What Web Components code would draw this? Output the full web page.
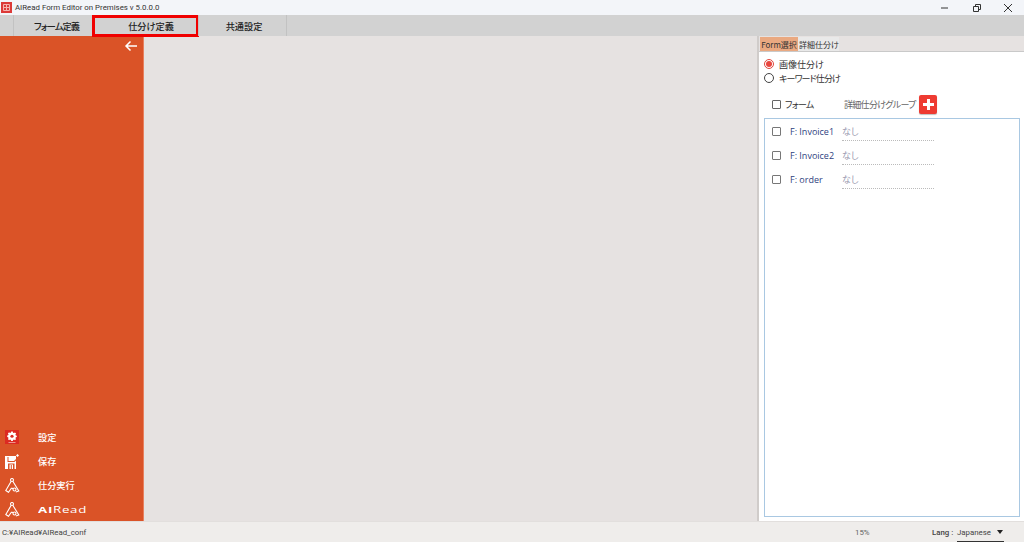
<!DOCTYPE html>
<html lang="ja">
<head>
<meta charset="utf-8">
<title>AIRead Form Editor</title>
<style>
    html, body { margin: 0; height: 100%; }
    body {
        width: 1024px;
        height: 542px;
        overflow: hidden;
        display: flex;
        flex-direction: column;
        font-family: "Noto Sans CJK JP", "Open Sans", sans-serif;
        font-feature-settings: "palt";
        background: #e6e2e1;
    }
    .middle { flex: 1; display: flex; min-height: 0; }
    .canvas { flex: 1; background: #e6e2e1; }
</style>
</head>
<body>
<title-bar title="AIRead Form Editor on Premises v 5.0.0.0"></title-bar>
<tab-bar>
    <top-tab style="width:80px;letter-spacing:-.9px;padding-left:7px">フォーム定義</top-tab>
    <top-tab style="width:107px" active>仕分け定義</top-tab>
    <top-tab style="width:89px;padding-left:3px">共通設定</top-tab>
</tab-bar>
<div class="middle">
    <side-bar>
        <side-item icon="gear">設定</side-item>
        <side-item icon="save">保存</side-item>
        <side-item icon="logo">仕分実行</side-item>
        <side-item icon="logo" brand><b>AI</b>Read</side-item>
    </side-bar>
    <div class="canvas"></div>
    <form-panel>
        <form-row name="F: Invoice1"></form-row>
        <form-row name="F: Invoice2"></form-row>
        <form-row name="F: order"></form-row>
    </form-panel>
</div>
<status-bar path="C:¥AIRead¥AIRead_conf" zoom="15%" lang-name="Japanese"></status-bar>

<script>
const ICONS = {
    gear: `<svg width="14" height="14" viewBox="0 0 14 14">
        <rect width="14" height="14" fill="#dc2a22"/>
        <g transform="translate(1.400 .8) scale(.8)">
            <path fill="#fff" d="M6 1h2l.3 1.400 1.200.5 1.200-.8 1.400 1.400-.8 1.200.5 1.100 1.200.3v1.800l-1.200.3-.5 1.100.8 1.100-1.400 1.300-1.200-.7-1.200.5-.3 1.100H6l-.3-1.100-1.200-.5-1.200.7-1.400-1.300.8-1.100-.5-1.100L1 7.700V5.900l1.200-.3.5-1.100-.8-1.200 1.400-1.400 1.200.8 1.200-.5z"/>
            <circle cx="7" cy="6.800" r="2" fill="#dc2a22"/>
        </g>
        <path d="M3.500 12.500h7" stroke="#f3b0a8" stroke-width=".8"/>
    </svg>`,
    save: `<svg width="15" height="15" viewBox="0 0 15 15">
        <path fill="#fff" d="M0 2h11v3l-2 2H3.500V3H2.500v5h7L11 6.500V15H0z"/>
        <path fill="#da5327" d="M3 9.500h6.500V15H3z"/>
        <path fill="#fff" d="M4.500 10.500h3.500V15H4.500z"/>
        <path fill="#da5327" d="M5.800 11h1V15h-1z"/>
        <path fill="#fff" d="M12.500 0l1.500 1.500-1.500 1.500L11 1.500z"/>
    </svg>`,
    logo: `<svg width="15" height="15" viewBox="0 0 15 15" fill="none" stroke="#fff" stroke-width="1.100">
        <circle cx="7" cy="2" r="1.500"/>
        <circle cx="9.500" cy="11.500" r="1.500"/>
        <path d="M6.200 3.300 .8 12.500l2.700 1.800 3-4.300M7.800 3.300l6 9.700-3 1M6.500 10l1.700.8"/>
    </svg>`
};

class TitleBar extends HTMLElement {
    connectedCallback() {
        this.attachShadow({ mode: 'open' });
        this.shadowRoot.innerHTML = `
            <style>
                :host {
                    display: flex;
                    align-items: center;
                    height: 15px;
                    flex: none;
                    background: #f3f5f9;
                    font: 7.850px Roboto, sans-serif;
                    color: #333;
                }
                .logo { width: 11px; height: 11px; margin: 0 3px 0 1px; display: block; }
                .title { flex: 1; white-space: nowrap; }
                .btns { display: flex; }
                .btn { width: 31.500px; height: 15px; display: flex; align-items: center; justify-content: center; }
            </style>
            <svg class="logo" viewBox="0 0 11 11">
                <rect width="11" height="11" fill="#dc3a38"/>
                <path fill="none" stroke="#f5b5b0" d="M2.500 2.500h6v6h-6zM5.500 2.500v6M2.500 5.500h6"/>
            </svg>
            <span class="title">${this.getAttribute('title')}</span>
            <div class="btns">
                <div class="btn"><svg width="10" height="10"><path d="M1 5h7" stroke="#333"/></svg></div>
                <div class="btn"><svg width="10" height="10" fill="none" stroke="#333"><path d="M1.500 3.500h5v5h-5zM3.500 3.500v-2h5v5h-2"/></svg></div>
                <div class="btn"><svg width="10" height="10" stroke="#333"><path d="M1 1l8 8M9 1l-8 8"/></svg></div>
            </div>
        `;
    }
}

class TabBar extends HTMLElement {
    connectedCallback() {
        this.attachShadow({ mode: 'open' });
        this.shadowRoot.innerHTML = `
            <style>
                :host {
                    display: flex;
                    height: 21px;
                    flex: none;
                    padding-left: 13px;
                    background: #d2d2d2;
                }
            </style>
            <slot></slot>
        `;
    }
}

class TopTab extends HTMLElement {
    connectedCallback() {
        this.attachShadow({ mode: 'open' });
        this.shadowRoot.innerHTML = `
            <style>
                :host {
                    display: flex;
                    align-items: center;
                    justify-content: center;
                    box-sizing: border-box;
                    height: 21px;
                    padding-left: 5px;
                    border-left: 1px solid #c2c2c2;
                    border-right: 1px solid #c2c2c2;
                    margin-right: -1px;
                    font-size: 9.200px;
                    font-weight: 500;
                    color: #222;
                    position: relative;
                }
                :host([active]) { padding-left: 11px; }
                :host([active])::after {
                    content: "";
                    position: absolute;
                    left: -1px;
                    right: -1px;
                    top: 0;
                    bottom: -1px;
                    border: 3px solid #f00000;
                }
            </style>
            <slot></slot>
        `;
    }
}

class SideBar extends HTMLElement {
    connectedCallback() {
        this.attachShadow({ mode: 'open' });
        this.shadowRoot.innerHTML = `
            <style>
                :host {
                    display: flex;
                    flex-direction: column;
                    width: 144px;
                    flex: none;
                    background: #da5327;
                    border-right: 1px solid #e8805e;
                    box-sizing: border-box;
                }
                .back { display: flex; justify-content: flex-end; padding: 4px 5px 0 0; flex: 1; }
            </style>
            <div class="back">
                <svg width="14" height="12" viewBox="0 0 14 12" fill="none" stroke="#fff" stroke-width="1.500">
                    <path d="M13 6H2M6.500 1.500 2 6l4.500 4.500"/>
                </svg>
            </div>
            <div><slot></slot></div>
        `;
    }
}

class SideItem extends HTMLElement {
    connectedCallback() {
        const icon = this.getAttribute('icon');
        this.attachShadow({ mode: 'open' });
        this.shadowRoot.innerHTML = `
            <style>
                :host {
                    display: flex;
                    align-items: center;
                    height: 24px;
                    color: #fff;
                    font-size: 9.200px;
                    font-weight: 500;
                }
                .ic { width: 38px; padding-left: 5px; box-sizing: border-box; display: flex; flex: none; }
                .txt { display: block; transform-origin: left center; }
                :host([brand]) { font: 400 9.500px "Open Sans", sans-serif; letter-spacing: .5px; }
                :host([brand]) .txt { transform: scaleX(1.400); }
            </style>
            <div class="ic">${ICONS[icon]}</div>
            <span class="txt"><slot></slot></span>
        `;
    }
}

class FormPanel extends HTMLElement {
    connectedCallback() {
        this.attachShadow({ mode: 'open' });
        this.shadowRoot.innerHTML = `
            <style>
                :host {
                    display: flex;
                    flex-direction: column;
                    width: 267px;
                    flex: none;
                    box-sizing: border-box;
                    border-left: 2px solid #d0ccca;
                    font-size: 9px;
                    color: #333;
                }
                .tabs { display: flex; height: 15px; padding: 1px 0 0 1px; box-sizing: border-box; flex: none; }
                .tab { display: flex; align-items: center; justify-content: center; font-size: 8px; height: 14px; }
                .tab.on { width: 38px; background: #eaa981; }
                .tab.off { width: 41px; background: #e9e9e9; padding-left: 1px; box-sizing: border-box; }
                .body {
                    flex: 1;
                    min-height: 0;
                    display: flex;
                    flex-direction: column;
                    background: #fff;
                    border-top: 1px solid #c9c9c9;
                    padding: 5px 4px 4px 5px;
                }
                .radio { display: flex; align-items: center; gap: 5px; height: 14px; }
                .radio.kw { letter-spacing: -.9px; }
                .dot {
                    width: 10px; height: 10px; box-sizing: border-box;
                    border: 1px solid #444; border-radius: 50%;
                    display: flex; align-items: center; justify-content: center;
                }
                .dot.on { border-color: #e0453c; }
                .dot.on::after { content: ""; width: 6px; height: 6px; border-radius: 50%; background: #e8463e; }
                .head { display: flex; align-items: center; height: 20px; margin-top: 9px; padding-left: 8px; }
                .box { width: 9px; height: 9px; box-sizing: border-box; border: 1px solid #666; border-radius: 1px; flex: none; }
                .fm { margin-left: 4px; width: 59px; flex: none; letter-spacing: -.8px; }
                .grp { color: #666; width: 75px; flex: none; white-space: nowrap; letter-spacing: -.7px; }
                .add {
                    width: 18px; height: 19px; border-radius: 2px;
                    background: #ee3b32; display: flex; align-items: center; justify-content: center;
                    box-shadow: 0 1px 1px rgba(0,0,0,.25);
                }
                .list {
                    flex: 1;
                    min-height: 0;
                    margin-top: 4px;
                    border: 1px solid #a9c8e2;
                }
            </style>
            <div class="tabs">
                <div class="tab on">Form選択</div>
                <div class="tab off">詳細仕分け</div>
            </div>
            <div class="body">
                <div class="radio"><span class="dot on"></span>画像仕分け</div>
                <div class="radio kw"><span class="dot"></span>キーワード仕分け</div>
                <div class="head">
                    <span class="box"></span>
                    <span class="fm">フォーム</span>
                    <span class="grp">詳細仕分けグループ</span>
                    <span class="add">
                        <svg width="11" height="11"><path fill="#fff" d="M4 0h3v4h4v3H7v4H4V7H0V4h4z"/></svg>
                    </span>
                </div>
                <div class="list"><slot></slot></div>
            </div>
        `;
    }
}

class FormRow extends HTMLElement {
    connectedCallback() {
        this.attachShadow({ mode: 'open' });
        this.shadowRoot.innerHTML = `
            <style>
                :host {
                    display: flex;
                    align-items: center;
                    height: 24px;
                    padding-left: 7px;
                    font-size: 9px;
                }
                .box { width: 9px; height: 9px; box-sizing: border-box; border: 1px solid #777; border-radius: 1px; flex: none; }
                .name { margin-left: 9px; width: 52px; color: #2f3f80; font-family: "Open Sans", sans-serif; white-space: nowrap; }
                .none {
                    width: 92px;
                    height: 20px;
                    line-height: 22px;
                    box-sizing: border-box;
                    color: #9a9ab0;
                    border-bottom: 1px dotted #bbb;
                }
            </style>
            <span class="box"></span>
            <span class="name">${this.getAttribute('name')}</span>
            <span class="none">なし</span>
        `;
    }
}

class StatusBar extends HTMLElement {
    connectedCallback() {
        this.attachShadow({ mode: 'open' });
        this.shadowRoot.innerHTML = `
            <style>
                :host {
                    display: flex;
                    align-items: center;
                    height: 21px;
                    flex: none;
                    background: #efedeb;
                    border-top: 1px solid #e2dfdd;
                    box-sizing: border-box;
                    font: 7.850px Roboto, sans-serif;
                    color: #444;
                    padding-left: 2px;
                    position: relative;
                }
                .path { width: 853px; }
                .zoom { width: 77px; color: #666; }
                .lang { font-weight: 500; width: 25px; }
                .val { width: 40px; }
                .caret { width: 0; height: 0; border: 3px solid transparent; border-top: 4px solid #222; border-bottom: 0; }
                .rule { position: absolute; left: 957px; bottom: 0; width: 47px; height: 1px; background: #333; }
            </style>
            <span class="path">${this.getAttribute('path')}</span>
            <span class="zoom">${this.getAttribute('zoom')}</span>
            <span class="lang">Lang :</span>
            <span class="val">${this.getAttribute('lang-name')}</span>
            <span class="caret"></span>
            <span class="rule"></span>
        `;
    }
}

customElements.define('title-bar', TitleBar);
customElements.define('tab-bar', TabBar);
customElements.define('top-tab', TopTab);
customElements.define('side-bar', SideBar);
customElements.define('side-item', SideItem);
customElements.define('form-panel', FormPanel);
customElements.define('form-row', FormRow);
customElements.define('status-bar', StatusBar);
</script>
</body>
</html>
